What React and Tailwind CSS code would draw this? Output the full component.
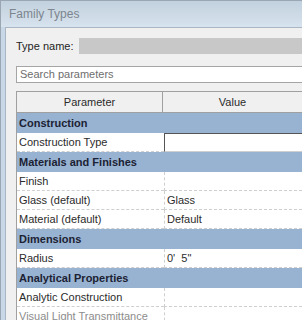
const rows = [
  { section: "Construction" },
  { name: "Construction Type", value: "", editing: true },
  { section: "Materials and Finishes" },
  { name: "Finish", value: "" },
  { name: "Glass (default)", value: "Glass" },
  { name: "Material (default)", value: "Default" },
  { section: "Dimensions" },
  { name: "Radius", value: "0'  5\"" },
  { section: "Analytical Properties" },
  { name: "Analytic Construction", value: "" },
  { name: "Visual Light Transmittance", value: "", muted: true },
];

function ParamRow({ row }) {
  if (row.section) {
    return (
      <div className="col-span-2 h-[20px] bg-[#98b3d2] pl-[2px] flex items-center font-bold text-[#1c2233]">
        {row.section}
      </div>
    );
  }
  return (
    <>
      <div
        className={
          "h-[19px] pl-[2px] flex items-center bg-white border-b border-dashed border-[#cfcfcf] " +
          (row.muted ? "text-[#8c8c8c]" : "text-[#2b2b2b]")
        }
      >
        {row.name}
      </div>
      {row.editing ? (
        <div className="h-[19px] bg-white border-t border-l border-[#555] border-b border-b-[#cfcfcf]" />
      ) : (
        <div className="h-[19px] pl-[2px] flex items-center whitespace-pre bg-white border-l border-dashed border-l-[#cfcfcf] border-b border-b-[#cfcfcf] text-[#2b2b2b]">
          {row.value}
        </div>
      )}
    </>
  );
}

export default function App() {
  return (
    <div
      className="w-[302px] h-[320px] overflow-hidden bg-[#c9d8e6] border-t border-l border-[#9aa6b2] flex flex-col text-[11px]"
      style={{ fontFamily: '"Liberation Sans", Arial, sans-serif' }}
    >
      <div className="h-[26px] shrink-0 bg-gradient-to-b from-[#c2d1de] to-[#d7e3ee] pl-[8px] flex items-center text-[12px] text-[#7d858e]">
        Family Types
      </div>
      <div className="flex-1 ml-[4px] bg-[#f0f0f0] border-l border-t border-[#a9b7c5] pl-[10px] pt-[10px] flex flex-col">
        <div className="flex items-center h-[16px]">
          <span className="w-[63px] text-[#1e1e1e]">Type name:</span>
          <div className="flex-1 h-[16px] bg-[#c8c8c8]" />
        </div>
        <div className="mt-[12px] h-[17px] bg-white border border-r-0 border-[#a5a5a5] flex items-center pl-[3px] text-[#6e6e6e]">
          Search parameters
        </div>
        <div className="mt-[8px] border-t border-l border-[#a0a0a0]">
          <div className="grid grid-cols-[146px_1fr] h-[21px] border-b border-[#a0a0a0] text-[#2b2b2b]">
            <div className="flex items-center justify-center border-r border-[#a0a0a0]">Parameter</div>
            <div className="flex items-center justify-center">Value</div>
          </div>
          <div className="grid grid-cols-[147px_1fr]">
            {rows.map((row, i) => (
              <ParamRow key={i} row={row} />
            ))}
          </div>
        </div>
      </div>
    </div>
  );
}
